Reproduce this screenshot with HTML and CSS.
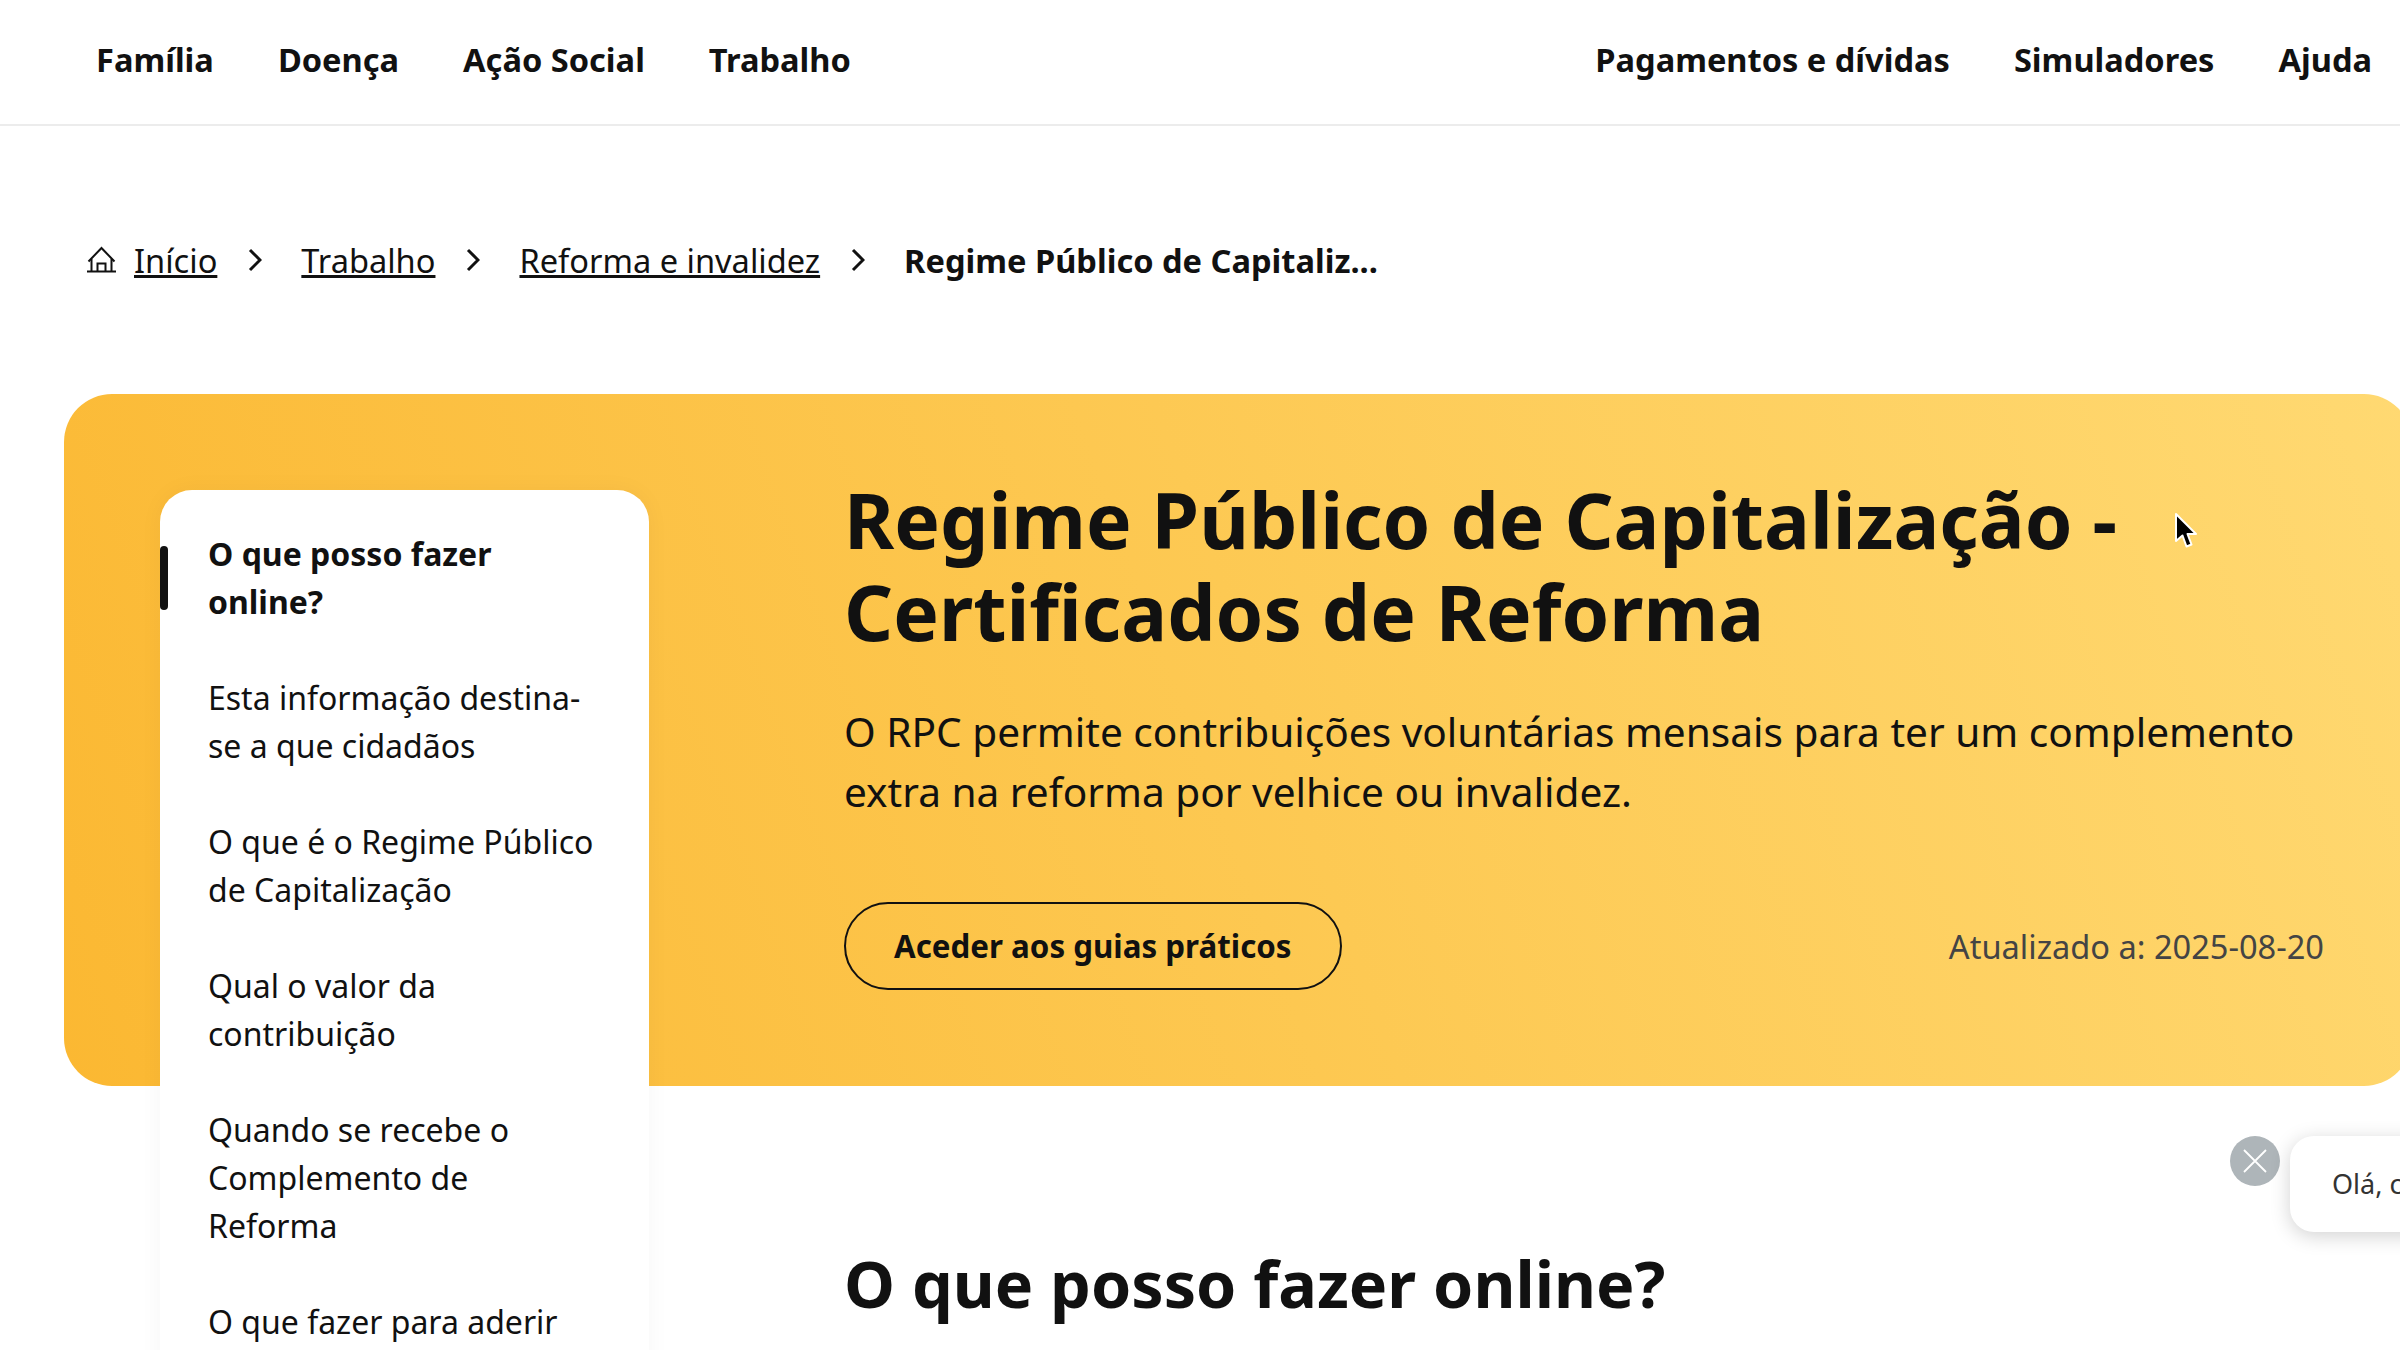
FILE: index.html
```html
<!DOCTYPE html>
<html lang="pt">
<head>
    <meta charset="UTF-8">
    <meta name="viewport" content="width=device-width, initial-scale=1.0">
    <title>Regime Público de Capitalização - Certificados de Reforma</title>
    <link rel="stylesheet" href="styles.css">
</head>
<body>
    <header class="topbar">
        <nav class="topbar-links">
            <a href="#">Família</a>
            <a href="#">Doença</a>
            <a href="#">Ação Social</a>
            <a href="#">Trabalho</a>
        </nav>
        <nav class="topbar-links">
            <a href="#">Pagamentos e dívidas</a>
            <a href="#">Simuladores</a>
            <a href="#">Ajuda</a>
        </nav>
    </header>

    <nav class="breadcrumb">
        <svg class="home-icon" viewBox="0 0 30 30" fill="none" stroke="#111" stroke-width="2">
            <path d="M2.5 16.5 15.5 3l13 13.5"/>
            <path d="M5.5 14v12.5M25.5 14v12.5"/>
            <path d="M1 26.5h29"/>
            <path d="M11.5 26.5v-8h8v8"/>
        </svg>
        <a href="#">Início</a>
        <svg class="crumb-arrow" viewBox="0 0 14 24" fill="none" stroke="#111" stroke-width="3"><path d="M2 2l10 10L2 22"/></svg>
        <a href="#">Trabalho</a>
        <svg class="crumb-arrow" viewBox="0 0 14 24" fill="none" stroke="#111" stroke-width="3"><path d="M2 2l10 10L2 22"/></svg>
        <a href="#">Reforma e invalidez</a>
        <svg class="crumb-arrow" viewBox="0 0 14 24" fill="none" stroke="#111" stroke-width="3"><path d="M2 2l10 10L2 22"/></svg>
        <strong>Regime Público de Capitaliz...</strong>
    </nav>

    <section class="hero">
        <aside class="side-menu">
            <a href="#" class="active">O que posso fazer online?</a>
            <a href="#">Esta informação destina-se a que cidadãos</a>
            <a href="#">O que é o Regime Público de Capitalização</a>
            <a href="#">Qual o valor da contribuição</a>
            <a href="#">Quando se recebe o Complemento de Reforma</a>
            <a href="#">O que fazer para aderir</a>
        </aside>
        <div class="hero-text">
            <h1>Regime Público de Capitalização - Certificados de Reforma</h1>
            <p class="lead">O RPC permite contribuições voluntárias mensais para ter um complemento extra na reforma por velhice ou invalidez.</p>
            <div class="hero-footer">
                <a href="#" class="guide-btn">Aceder aos guias práticos</a>
                <span class="updated">Atualizado a: 2025-08-20</span>
            </div>
        </div>
    </section>

    <main class="content">
        <h2>O que posso fazer online?</h2>
    </main>

    <div class="chat-close">
        <svg viewBox="0 0 24 24" fill="none" stroke="#fff" stroke-width="1.8"><path d="M1 1l22 22M23 1L1 23"/></svg>
    </div>
    <div class="chat-bubble">Olá, como posso ajudar?</div>

    <svg class="cursor" viewBox="0 0 24 38">
        <path d="M2 2v27l6.5-5.5 4 11 5-2-4-10.5H22z" fill="#000" stroke="#fff" stroke-width="2" stroke-linejoin="round"/>
    </svg>
</body>
</html>
```

FILE: styles.css
```css
html, body {
    height: 1350px;
    overflow: hidden;
}
body {
    font-family: "Noto Sans", sans-serif;
    color: #111;
    margin: 0;
    padding: 0;
    background-color: #fff;
}
a {
    color: inherit;
}
.topbar {
    display: flex;
    justify-content: space-between;
    align-items: center;
    height: 124px;
    padding: 0 28px 0 96px;
    border-bottom: 2px solid #ececec;
}
.topbar-links {
    display: flex;
    gap: 64px;
    margin-bottom: 6px;
}
.topbar-links a {
    font-size: 32.6px;
    font-weight: 700;
    text-decoration: none;
}
.breadcrumb {
    display: flex;
    align-items: center;
    height: 48px;
    margin-top: 110px;
    padding: 0 0 0 86px;
    font-size: 32.6px;
}
.breadcrumb a {
    text-decoration-thickness: 3px;
}
.home-icon {
    width: 30px;
    height: 30px;
    margin-right: 18px;
}
.crumb-arrow {
    width: 14px;
    height: 24px;
    margin: 0 39px 0 31px;
}
.hero {
    display: flex;
    align-items: flex-start;
    height: 692px;
    margin: 110px -12px 0 64px;
    padding-top: 96px;
    box-sizing: border-box;
    border-radius: 48px;
    background: linear-gradient(70deg, #fbb832 0%, #ffd972 100%);
}
.side-menu {
    display: flex;
    flex-direction: column;
    gap: 48px;
    flex: none;
    position: relative;
    width: 489px;
    box-sizing: border-box;
    margin-left: 96px;
    padding: 40px 48px 60px;
    border-radius: 32px;
    background-color: #fff;
    box-shadow: 0 0 24px rgba(0, 0, 0, 0.04);
    font-size: 32px;
    line-height: 48px;
}
.side-menu a {
    text-decoration: none;
}
.side-menu .active {
    font-weight: 700;
}
.side-menu .active::before {
    content: "";
    position: absolute;
    left: 0;
    top: 56px;
    width: 8px;
    height: 64px;
    border-radius: 4px;
    background-color: #111;
}
.hero-text {
    flex: 1;
    margin-left: 195px;
    padding-right: 88px;
}
h1 {
    margin: -17px 0 0;
    font-size: 76.6px;
    line-height: 92px;
    font-weight: 700;
}
.lead {
    margin: 45px 0 0;
    font-size: 40.6px;
    line-height: 60px;
}
.hero-footer {
    display: flex;
    justify-content: space-between;
    align-items: center;
    margin-top: 80px;
}
.guide-btn {
    padding: 20px 48px;
    border: 2px solid #111;
    border-radius: 48px;
    font-size: 31.3px;
    line-height: 44px;
    font-weight: 700;
    text-decoration: none;
}
.updated {
    font-size: 32.6px;
    color: #444;
}
.content {
    margin-left: 844px;
}
h2 {
    margin: 157px 0 0;
    font-size: 64.6px;
    line-height: 80px;
    font-weight: 700;
}
.chat-close {
    display: flex;
    align-items: center;
    justify-content: center;
    position: absolute;
    left: 2230px;
    top: 1136px;
    width: 50px;
    height: 50px;
    border-radius: 50%;
    background-color: #aeb5b9;
}
.chat-close svg {
    width: 24px;
    height: 24px;
}
.chat-bubble {
    position: absolute;
    left: 2290px;
    top: 1136px;
    width: 400px;
    height: 96px;
    box-sizing: border-box;
    padding: 30px 42px;
    border-radius: 24px;
    background-color: #fff;
    box-shadow: 0 4px 20px rgba(0, 0, 0, 0.18);
    font-size: 27px;
    line-height: 36px;
    color: #333;
    white-space: nowrap;
}
.cursor {
    position: absolute;
    left: 2174px;
    top: 512px;
    width: 24px;
    height: 38px;
}
```
